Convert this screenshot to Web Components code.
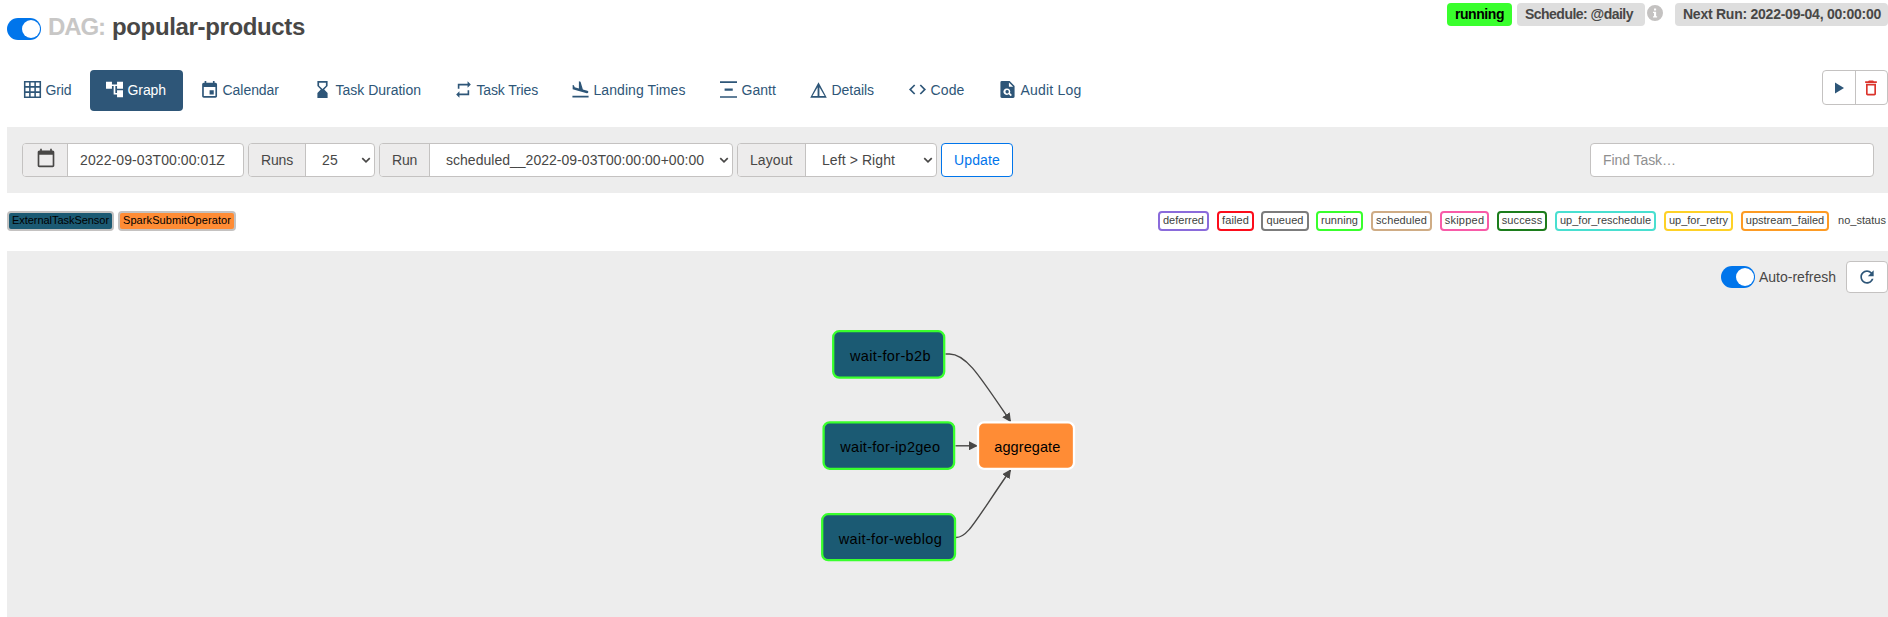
<!DOCTYPE html>
<html lang="en">
<head>
<meta charset="utf-8">
<title>popular-products - Graph</title>
<style>
html,body{margin:0;height:617px;overflow:hidden;background:#fff}
body{font:14px/20px "Liberation Sans",Arial,sans-serif;color:#484746}
</style>
</head>
<body>
<dag-page></dag-page>
<script>
const ICONS = {
  grid:'<path d="M1 1h22v22H1z M1 8.3h22M1 15.7h22M8.3 1v22M15.7 1v22" fill="none" stroke="currentColor" stroke-width="2.2"/>',
  graph:'<path d="M22 11V3h-7v3H9V3H2v8h7V8h2v10h4v3h7v-8h-7v3h-2V8h2v3z" transform="translate(-2.4 -2.4) scale(1.2)"/>',
  calendar:'<path d="M17 12h-5v5h5v-5zM16 1v2H8V1H6v2H5c-1.11 0-1.99.9-1.99 2L3 19c0 1.1.89 2 2 2h14c1.1 0 2-.9 2-2V5c0-1.1-.9-2-2-2h-1V1h-2zm3 18H5V8h14v11z" transform="translate(-1.9 -1) scale(1.17)"/>',
  hourglass:'<path d="M18 22l-.01-6L14 12l3.990-4.010L18 2H6v6l4 4-4 3.990V22h12zM8 7.500V4h8v3.500l-4 4-4-4z" transform="translate(-2.400 -2.400) scale(1.2)"/>',
  repeat:'<path d="M7 7h10v3l4-4-4-4v3H5v6h2V7zm10 10H7v-3l-4 4 4 4v-3h12v-6h-2v4z" transform="translate(-1.800 -1.800) scale(1.15)"/>',
  landing:'<path d="M2.500 19h19v2h-19zm16.840-3.150c.8.210 1.620-.260 1.840-1.060.210-.800-.260-1.620-1.060-1.840l-5.310-1.420-2.760-9.020L10.120 2v8.280L5.150 8.950l-.930-2.320-1.450-.390v5.170l16.570 4.440z" transform="translate(-2.400 -1.900) scale(1.2)"/>',
  gantt:'<path d="M0 .5h24v2.200H0zM0 21.500h24v2.200H0zM6.500 10.700h11.500v3H6.500z"/>',
  details:'<path d="M3 21h18L12 3 3 21zM13 8.920L18.600 19H13V8.920zm-2 0V19H5.400L11 8.920z" transform="translate(-3.600 -2) scale(1.3 1.22)"/>',
  code:'<path d="M9.400 16.600L4.800 12l4.600-4.600L8 6l-6 6 6 6 1.400-1.400zm5.200 0l4.600-4.600-4.600-4.600L16 6l6 6-6 6-1.400-1.400z" transform="translate(-2.400 -2.400) scale(1.2)"/>',
  audit:'<path fill-rule="evenodd" d="M4 0h11l7 7v15q0 2-2 2H4q-2 0-2-2V2q0-2 2-2zM14 2v6h6zM11 10.500a4.600 4.600 0 1 0 2.700 8.200l2.800 2.800 1.700-1.700-2.700-2.800A4.600 4.600 0 0 0 11 10.500zM11 12.800a2.400 2.400 0 1 1 0 4.700 2.400 2.400 0 0 1 0-4.700z"/>',
  date:'<path d="M20 3h-1V1h-2v2H7V1H5v2H4c-1.100 0-2 .9-2 2v16c0 1.100.9 2 2 2h16c1.100 0 2-.9 2-2V5c0-1.100-.9-2-2-2zm0 18H4V8h16v13z"/>',
  play:'<path d="M4 1l18 11L4 23z"/>',
  trash:'<path d="M6 19c0 1.100.9 2 2 2h8c1.100 0 2-.9 2-2V7H6v12zM8 9h8v10H8V9zm7.500-5l-1-1h-5l-1 1H5v2h14V4z"/>',
  refresh:'<path d="M17.650 6.350C16.200 4.900 14.210 4 12 4c-4.420 0-7.990 3.580-7.990 8s3.570 8 7.990 8c3.730 0 6.840-2.550 7.730-6h-2.080c-.820 2.330-3.040 4-5.650 4-3.310 0-6-2.690-6-6s2.690-6 6-6c1.660 0 3.140.690 4.220 1.780L13 11h7V4l-2.350 2.350z"/>',
  info:'<path fill-rule="evenodd" d="M12 0a12 12 0 1 0 0 24a12 12 0 0 0 0-24zM10.500 5.300h3.200v2.900h-3.200zM9 10h4.700v7h1.500v1.900H9V17h1.500v-5H9z"/>',
  chevron:'<path d="M3 7.500l9 9 9-9" fill="none" stroke="currentColor" stroke-width="4"/>'
};
class Base extends HTMLElement {
  connectedCallback(){
    if(this.shadowRoot) return;
    this.attachShadow({mode:'open'}).innerHTML = this.view();
    this.ready && this.ready();
  }
  a(n,d=''){ return this.getAttribute(n) ?? d; }
}
// Glyph from the icon set, square, sized by the "size" attribute.
customElements.define('ui-icon', class extends Base {
  view(){ const s=this.a('size','17'); return `<style>:host{display:block;flex:none;width:${s}px;height:${s}px}svg{display:block;overflow:visible}</style><svg width="${s}" height="${s}" viewBox="0 0 24 24" fill="currentColor">${ICONS[this.a('name')]}</svg>`; }
});
// Text that spreads its letters to fill the width "w".
customElements.define('fit-text', class extends Base {
  view(){ return `<style>:host{display:block;flex:none;white-space:nowrap;width:${this.a('w')}px}span{display:inline-block}</style><span><slot></slot></span>`; }
  ready(){
    const s=this.shadowRoot.querySelector('span'), n=this.textContent.length;
    s.style.letterSpacing=((+this.a('w')-s.getBoundingClientRect().width)/n)+'px';
  }
});
customElements.define('ui-toggle', class extends Base {
  view(){ return `<style>:host{display:flex;flex:none;box-sizing:border-box;width:34px;height:22px;border-radius:11px;background:#0075eb;padding:2px 1px;justify-content:flex-end}i{width:18px;height:18px;border-radius:50%;background:#fff}</style><i></i>`; }
});
customElements.define('nav-tab', class extends Base {
  view(){ return `<style>:host{display:flex;box-sizing:border-box;width:${this.a('w')}px;height:41px;padding:0 0 0 16px;align-items:center;color:#2e5678;border-radius:4px}
  :host([active]){background:#2e5678;color:#fff}ui-icon{margin-top:-2px}fit-text{margin:-2px 0 0 4.5px}</style><ui-icon name="${this.a('icon')}"></ui-icon><fit-text w="${this.a('tw')}">${this.a('label')}</fit-text>`; }
});
customElements.define('ui-badge', class extends Base {
  view(){ return `<style>:host{display:block;box-sizing:border-box;width:${this.a('w')}px;height:23px;padding:2px 0 0 8px;border-radius:4px;background:${this.a('bg','#dedede')};color:${this.a('fg','#484746')};font-weight:bold;line-height:19px}</style><fit-text w="${this.a('tw')}">${this.a('label')}</fit-text>`; }
});
// Bordered control with an optional grey leading cell.
customElements.define('field-group', class extends Base {
  view(){
    const sel=this.hasAttribute('select');
    return `<style>:host{display:flex;box-sizing:border-box;width:${this.a('w')}px;height:34px;border:1px solid #c4c2c1;border-radius:4px;background:#fff;overflow:hidden}
    .lead{box-sizing:border-box;width:${this.a('lead')}px;background:#edecec;border-right:1px solid #c4c2c1;padding-left:12px;display:flex;align-items:center}
    .val{flex:1;display:flex;align-items:center;justify-content:space-between;padding:0 3px 0 ${sel?16:12}px}
    .lead ui-icon{margin:-4px 0 0 1px}</style>
    ${this.a('lead')?`<div class="lead">${this.a('label')?`<fit-text w="${this.a('lw')}">${this.a('label')}</fit-text>`:'<ui-icon name="date" size="20"></ui-icon>'}</div>`:''}
    <div class="val"><fit-text w="${this.a('tw')}">${this.a('value')}</fit-text>${sel?'<ui-icon name="chevron" size="10"></ui-icon>':''}</div>`; }
});
customElements.define('legend-chip', class extends Base {
  view(){ return `<style>:host{display:flex;box-sizing:border-box;width:${this.a('w')}px;height:20px;border:2px solid ${this.a('c')};border-radius:4px;background:${this.a('bg','#fff')};color:${this.a('fg','#403f3e')};font-size:11px;line-height:15px;justify-content:center;margin-left:${this.a('ml','0')}px}</style><fit-text w="${this.a('tw')}">${this.a('label')}</fit-text>`; }
});
customElements.define('dag-graph', class extends Base {
  view(){
    const node=(x,y,w,h,fill,stroke,tx,tw,t)=>`<rect x="${x}" y="${y}" width="${w}" height="${h}" rx="6" fill="${fill}" stroke="${stroke}" stroke-width="2.3"/><text x="${tx}" y="${y+29.500}" textLength="${tw}">${t}</text>`;
    return `<style>:host{display:block}svg{display:block;font:14.500px "Liberation Sans",Arial,sans-serif}</style>
    <svg width="300" height="260" viewBox="800 310 300 260">
    <defs><marker id="arrow" viewBox="0 0 10 10" refX="9" refY="5" markerUnits="userSpaceOnUse" markerWidth="9" markerHeight="9" orient="auto"><path d="M0 0L10 5 0 10z" fill="#484746"/></marker></defs>
    <g fill="none" stroke="#484746" stroke-width="1.400"><path marker-end="url(#arrow)" d="M945.500 354h4C966 354 979 375 1010.500 421.500"/><path marker-end="url(#arrow)" d="M955.500 445.800H977"/><path marker-end="url(#arrow)" d="M956 537.500C968 537.500 975 521 1010.500 470"/></g>
    ${node(833.2,331.2,111,46.4,'#1b5a73','#39ff2d',850,80.500,'wait-for-b2b')}
    ${node(823.6,422.4,130.500,46.4,'#1b5a73','#39ff2d',840.300,99.700,'wait-for-ip2geo')}
    ${node(822.2,514.2,132.800,46,'#1b5a73','#39ff2d',838.800,103,'wait-for-weblog')}
    ${node(978,422.4,96,46.4,'#ff8c35','#fff',994.300,66,'aggregate')}</svg>`; }
});
customElements.define('dag-page', class extends Base {
  view(){
    const tabs=[['grid','Grid',80,26],['graph','Graph',93,38.5],['calendar','Calendar',111,56.5],['hourglass','Task Duration',139,85.5],['repeat','Task Tries',115,61.5],['landing','Landing Times',146,92],['gantt','Gantt',88,34.500],['details','Details',97,42.500],['code','Code',88,34],['audit','Audit Log',114,61]];
    const st=[['deferred',51,41,'#8a6bdb',0],['failed',37,27,'#fc0d1b',8],['queued',48,37,'#7c7c7c',7],['running',47,37,'#39ff2d',7],['scheduled',61,51,'#cfac85',8],['skipped',49,39.500,'#f85ba8',8],['success',50,40.500,'#1c7d1c',8],['up_for_reschedule',101,91,'#49dfd0',8],['up_for_retry',69,59,'#fed127',8],['upstream_failed',88,78.500,'#fd9b24',8],['no_status',52,48,'transparent',7]];
    return `<style>
    :host{display:flex;flex-direction:column;width:1888px;height:617px;overflow:hidden}
    .head{display:flex;height:70px;padding-left:7px;align-items:flex-start}
    .head>ui-toggle{margin-top:18px}
    h3{display:flex;margin:0 auto 0 7px;padding-top:14px;font-size:24px;line-height:26px;font-weight:bold}
    h3 fit-text:first-child{color:#c8c7c6;margin-right:7px}
    .badges{display:flex;padding-top:3px}
    .nav{display:flex;gap:2px;height:57px;padding-left:8px}
    .act{display:flex;box-sizing:border-box;width:66px;height:35px;margin-left:auto;border:1px solid #c4c2c1;border-radius:4px}
    .act div{flex:1;display:flex;align-items:center;justify-content:center}
    .act div:first-child{border-right:1px solid #c4c2c1;color:#2e5678}.act div:last-child{color:#db342c}
    .bar{display:flex;box-sizing:border-box;height:66px;margin-left:7px;padding:16px 14px 0 15px;background:#ededed;gap:4px}
    .upd{display:flex;box-sizing:border-box;width:72px;height:34px;border:1px solid #0075eb;border-radius:4px;background:#fff;color:#0075eb;align-items:center;padding-left:12px}
    .find{margin-left:auto;color:#8f8f8f}
    .legend{display:flex;height:40px;padding:18px 0 0 7px}
    .states{display:flex;margin-left:auto}
    .canvas{flex:1;position:relative;margin-left:7px;background:#ededed}
    .auto{display:flex;justify-content:flex-end;align-items:center;padding-top:10px;height:32px}
    .auto fit-text{margin:0 10px 0 4px}
    .re{display:flex;box-sizing:border-box;width:42px;height:32px;border:1px solid #c4c2c1;border-radius:4px;background:#fff;color:#2e5678;align-items:center;justify-content:center}
    dag-graph{position:absolute;left:793px;top:59px}
    </style>
    <div class="head"><ui-toggle></ui-toggle><h3><fit-text w="57">DAG:</fit-text><fit-text w="193">popular-products</fit-text></h3>
    <div class="badges"><ui-badge w="65" tw="49" label="running" bg="#39ff2d" fg="#000"></ui-badge><ui-badge style="margin-left:5px" w="128" tw="108" label="Schedule: @daily"></ui-badge><ui-icon style="margin:2px 12px 0 2px;color:#c4c2c1" name="info" size="16"></ui-icon><ui-badge w="213" tw="198" label="Next Run: 2022-09-04, 00:00:00"></ui-badge></div></div>
    <div class="nav">${tabs.map((t,i)=>`<nav-tab ${i==1?'active':''} icon="${t[0]}" label="${t[1]}" w="${t[2]}" tw="${t[3]}"></nav-tab>`).join('')}<div class="act"><div><ui-icon name="play" size="12"></ui-icon></div><div><ui-icon name="trash" size="20"></ui-icon></div></div></div>
    <div class="bar"><field-group w="222" lead="45" value="2022-09-03T00:00:01Z" tw="145"></field-group><field-group select w="127" lead="57" label="Runs" lw="32" value="25" tw="16"></field-group><field-group select w="354" lead="50" label="Run" lw="25" value="scheduled__2022-09-03T00:00:00+00:00" tw="258"></field-group><field-group select w="200" lead="68" label="Layout" lw="42.500" value="Left &gt; Right" tw="73"></field-group><div class="upd"><fit-text w="46">Update</fit-text></div><field-group class="find" w="284" value="Find Task…" tw="73"></field-group></div>
    <div class="legend"><legend-chip w="107" tw="97" c="#c4c2c1" bg="#1b5a73" fg="#000" label="ExternalTaskSensor"></legend-chip><legend-chip ml="4" w="118" tw="108" c="#c4c2c1" bg="#ff8c35" fg="#000" label="SparkSubmitOperator"></legend-chip>
    <div class="states">${st.map(s=>`<legend-chip label="${s[0]}" w="${s[1]}" tw="${s[2]}" c="${s[3]}" ml="${s[4]}"></legend-chip>`).join('')}</div></div>
    <div class="canvas"><div class="auto"><ui-toggle></ui-toggle><fit-text w="77">Auto-refresh</fit-text><div class="re"><ui-icon name="refresh" size="20"></ui-icon></div></div><dag-graph></dag-graph></div>`; }
});
</script>
</body>
</html>
